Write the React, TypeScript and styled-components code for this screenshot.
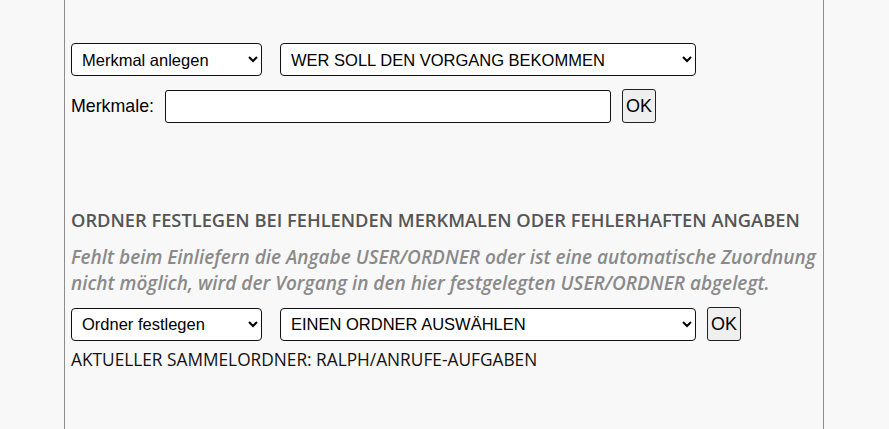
import React from "react";
import styled, { createGlobalStyle } from "styled-components";

const Global = createGlobalStyle`
  html, body { margin: 0; padding: 0; background: #f8f8f8; }
  body { font-family: "Liberation Sans", Arial, sans-serif; }
`;

const Page = styled.div`
  margin-left: 64px;
  width: 760px;
  min-height: 429px;
  box-sizing: border-box;
  border-left: 1px solid #8c8c8c;
  border-right: 1px solid #8c8c8c;
  padding: 43px 0 0 6px;
`;

const Row = styled.div<{ $mt?: number; $gap?: number }>`
  display: flex;
  align-items: center;
  gap: ${(p) => p.$gap ?? 11}px;
  margin-top: ${(p) => p.$mt ?? 0}px;
`;

const Select = styled.select<{ $w: number }>`
  width: ${(p) => p.$w}px;
  height: 33px;
  box-sizing: border-box;
  border: 1px solid #111;
  border-radius: 4px;
  background: #fff;
  color: #000;
  font-family: "Liberation Sans", Arial, sans-serif;
  font-size: 16.5px;
  padding: 0 4px 0 6px;
`;

const Label = styled.span`
  font-family: "Liberation Sans", Arial, sans-serif;
  font-size: 17.8px;
  color: #000;
`;

const Input = styled.input`
  width: 446px;
  height: 33px;
  box-sizing: border-box;
  border: 1px solid #111;
  border-radius: 3px;
  background: #fff;
`;

const Button = styled.button`
  width: 34px;
  height: 34px;
  box-sizing: border-box;
  border: 1px solid #222;
  border-radius: 3px;
  background: #efefef;
  font-family: "Liberation Sans", Arial, sans-serif;
  font-size: 18px;
  color: #000;
  padding: 0;
`;

const Heading = styled.div`
  margin-top: 85px;
  font-family: "Open Sans", sans-serif;
  font-weight: 600;
  font-size: 18.3px;
  line-height: 24px;
  color: #555;
  white-space: nowrap;
`;

const Note = styled.p`
  margin: 12px 0 0 0;
  font-family: "Open Sans", sans-serif;
  font-weight: 600;
  font-style: italic;
  font-size: 19px;
  line-height: 26px;
  color: #8a8a8a;
  width: 750px;
`;

const Current = styled.div`
  margin-top: 7px;
  font-family: "Open Sans", sans-serif;
  font-size: 17.3px;
  line-height: 24px;
  color: #111;
`;

export default function App() {
  return (
    <>
      <Global />
      <Page>
        <Row $gap={18}>
          <Select $w={191} defaultValue="a">
            <option value="a">Merkmal anlegen</option>
          </Select>
          <Select $w={416} defaultValue="b">
            <option value="b">WER SOLL DEN VORGANG BEKOMMEN</option>
          </Select>
        </Row>
        <Row $mt={13}>
          <Label>Merkmale:</Label>
          <Input type="text" />
          <Button>OK</Button>
        </Row>
        <Heading>ORDNER FESTLEGEN BEI FEHLENDEN MERKMALEN ODER FEHLERHAFTEN ANGABEN</Heading>
        <Note>
          Fehlt beim Einliefern die Angabe USER/ORDNER oder ist eine automatische Zuordnung
          nicht möglich, wird der Vorgang in den hier festgelegten USER/ORDNER abgelegt.
        </Note>
        <Row $mt={11}>
          <Select $w={191} defaultValue="c" style={{ marginRight: 7 }}>
            <option value="c">Ordner festlegen</option>
          </Select>
          <Select $w={416} defaultValue="d">
            <option value="d">EINEN ORDNER AUSWÄHLEN</option>
          </Select>
          <Button>OK</Button>
        </Row>
        <Current>AKTUELLER SAMMELORDNER: RALPH/ANRUFE-AUFGABEN</Current>
      </Page>
    </>
  );
}
